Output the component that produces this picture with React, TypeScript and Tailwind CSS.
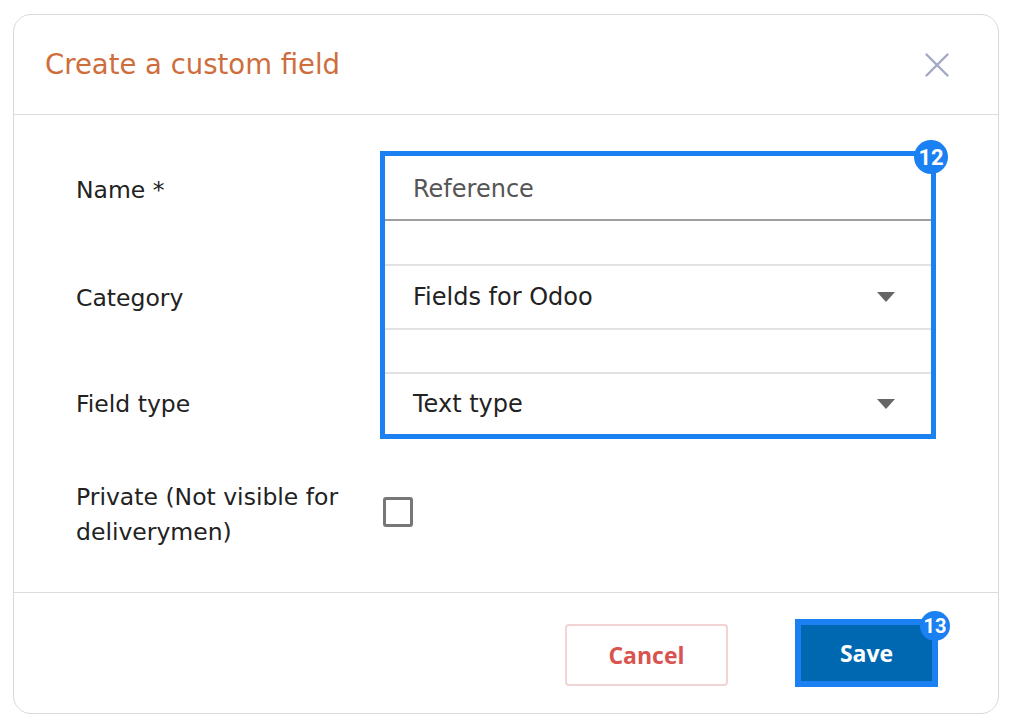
import { X } from "lucide-react";

function Caret() {
  return (
    <svg width="18" height="10" viewBox="0 0 18 10" className="shrink-0">
      <path d="M0 0 L18 0 L9 10 Z" fill="#666666" />
    </svg>
  );
}

function Badge({ n, className }: { n: number; className: string }) {
  return (
    <span
      className={`absolute flex items-center justify-center rounded-full bg-[#1b80f2] font-bold text-white ${className}`}
      style={{ fontFamily: "Roboto, 'Liberation Sans', sans-serif" }}
    >
      {n}
    </span>
  );
}

export default function App() {
  const font = { fontFamily: "'DejaVu Sans', 'Open Sans', sans-serif" };

  return (
    <div className="min-h-[727px] w-[1011px] bg-white pt-[14px] pl-[13px]" style={font}>
      <div className="flex h-[700px] w-[986px] flex-col rounded-[18px] border border-[#d9d9d9] bg-white">
        <div className="flex h-[100px] shrink-0 items-center justify-between border-b border-[#dcdcdc] pl-[31px] pr-[40px]">
          <h2 className="text-[27.5px] font-normal text-[#cf6e3d]">Create a custom field</h2>
          <X className="h-[42px] w-[42px] text-[#a3a9c3]" strokeWidth={1.4} />
        </div>

        <div className="flex flex-1 flex-col pl-[62px] pt-[36px]">
          <div className="flex">
            <div className="flex w-[304px] flex-col pt-[7px] text-[23.5px] text-[#222]">
              <div className="flex h-[65px] items-center">Name *</div>
              <div className="h-[43px]" />
              <div className="flex h-[66px] items-center">Category</div>
              <div className="h-[42px]" />
              <div className="flex h-[62px] items-center">Field type</div>
            </div>

            <div className="relative w-[556px] border-[5px] border-[#1b80f2]">
              <Badge n={12} className="-top-[16px] -right-[17px] h-[34px] w-[34px] text-[22px]" />
              <div className="flex h-[65px] items-center border-b-2 border-[#9e9e9e] pt-[2px] pl-[28px] text-[24px] text-[#555]">
                Reference
              </div>
              <div className="h-[43px]" />
              <div className="flex h-[66px] items-center justify-between border-y-2 border-[#e2e2e2] pl-[28px] pr-[36px] text-[24px] text-[#222]">
                <span>Fields for Odoo</span>
                <Caret />
              </div>
              <div className="h-[42px]" />
              <div className="flex h-[62px] items-center justify-between border-t-2 border-[#e2e2e2] pl-[28px] pr-[36px] text-[24px] text-[#222]">
                <span>Text type</span>
                <Caret />
              </div>
            </div>
          </div>

          <div className="mt-[41px] flex">
            <div className="w-[304px] text-[23.5px] leading-[35px] text-[#222]">
              Private (Not visible for
              <br />
              deliverymen)
            </div>
            <div className="mt-[17px] ml-[3px] h-[30px] w-[30px] rounded-[3px] border-[3px] border-[#777]" />
          </div>
        </div>

        <div
          className="flex h-[121px] shrink-0 items-center justify-end gap-[67px] border-t border-[#dcdcdc] pr-[60px]"
          style={{ fontFamily: "'Open Sans', Roboto, sans-serif" }}
        >
          <button className="mt-[4px] flex h-[62px] w-[163px] items-center justify-center rounded-[4px] border-2 border-[#f2d4d4] text-[23px] font-bold text-[#d9534f]">
            Cancel
          </button>
          <div className="relative border-[6px] border-[#1b80f2]">
            <button className="flex h-[56px] w-[131px] items-center justify-center bg-[#0068b1] text-[23px] font-bold text-white">
              Save
            </button>
            <Badge n={13} className="-top-[14px] -right-[18px] h-[30px] w-[30px] text-[20px]" />
          </div>
        </div>
      </div>
    </div>
  );
}
